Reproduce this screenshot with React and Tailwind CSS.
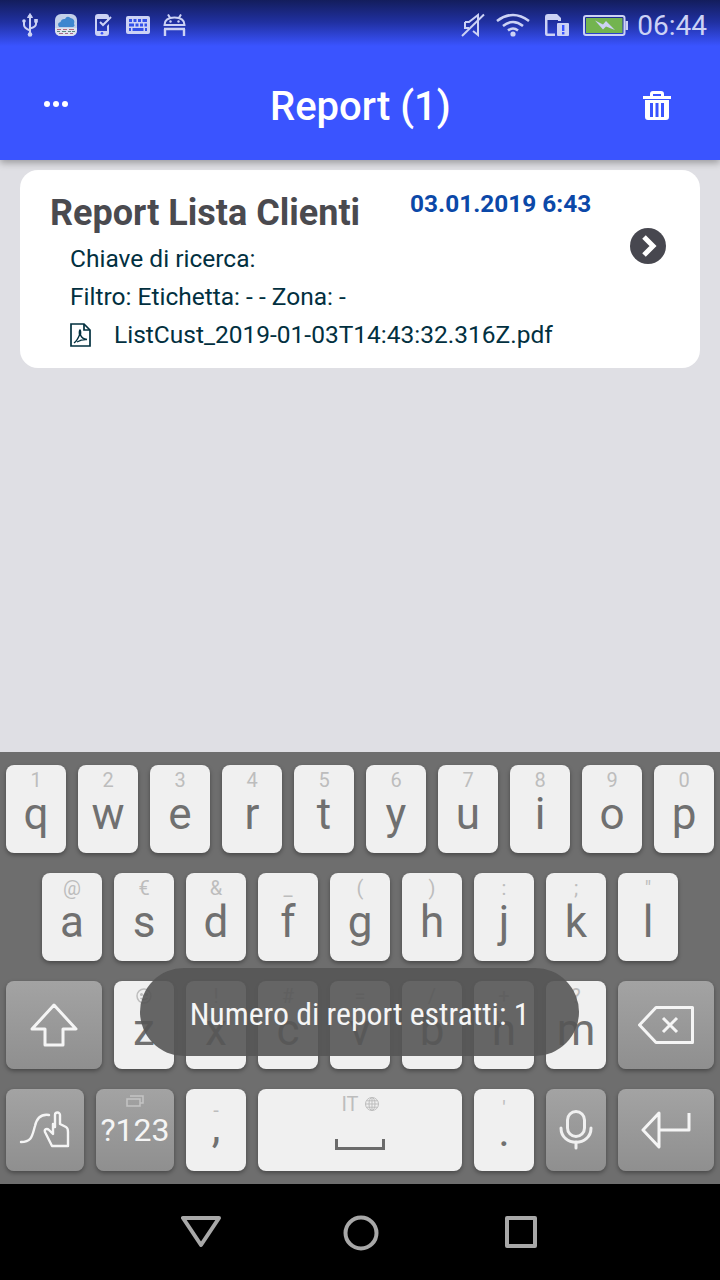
import React from "react";

const row1 = [["1","q"],["2","w"],["3","e"],["4","r"],["5","t"],["6","y"],["7","u"],["8","i"],["9","o"],["0","p"]];
const row2 = [["@","a"],["€","s"],["&","d"],["_","f"],["(","g"],[")","h"],[":","j"],[";","k"],['"',"l"]];
const row3 = [["","z"],["!","x"],["#","c"],["=","v"],["/","b"],["+","n"],["?","m"]];

function Key({ hint, letter, smile }) {
  return (
    <div className="w-[60px] h-full rounded-[8px] bg-[#f0f0f0] shadow-[0_2px_4px_rgba(0,0,0,0.35)] flex flex-col items-center pt-[4px]">
      <div className="h-[22px] text-[20px] leading-[22px] text-[#bdbdbd] flex items-center justify-center">
        {smile ? (
          <svg width="16" height="16" viewBox="0 0 16 16" fill="none" stroke="#bdbdbd" strokeWidth="1.5">
            <circle cx="8" cy="8" r="7" />
            <circle cx="5.5" cy="6.5" r="0.8" fill="#bdbdbd" />
            <circle cx="10.5" cy="6.5" r="0.8" fill="#bdbdbd" />
            <path d="M4.5 10 Q8 13 11.5 10" />
          </svg>
        ) : hint}
      </div>
      <div className="text-[44px] leading-[48px] text-[#707070] -mt-[1px]">{letter}</div>
    </div>
  );
}

function FnKey({ className, children }) {
  return (
    <div className={`h-full rounded-[8px] bg-gradient-to-b from-[#a3a3a3] to-[#8f8f8f] shadow-[0_2px_4px_rgba(0,0,0,0.35)] flex flex-col items-center justify-center ${className}`}>
      {children}
    </div>
  );
}

function StatusLeft() {
  const c = "#ccd2f5";
  return (
    <div className="flex items-center pl-[22px]">
      <svg width="16" height="24" viewBox="0 0 16 24" fill="none" stroke={c} strokeWidth="2">
        <path d="M8 3 V21" />
        <path d="M5.5 4.5 L8 0.5 L10.5 4.5 Z" fill={c} strokeWidth="1" />
        <circle cx="8" cy="21.5" r="2.3" fill={c} stroke="none" />
        <path d="M2 9 V12 Q2 15 8 17.5" />
        <path d="M14 8 V11 Q14 14 8 15.5" />
        <circle cx="2" cy="8" r="1.8" fill={c} stroke="none" />
        <rect x="12.2" y="6" width="3.6" height="3.6" fill={c} stroke="none" />
      </svg>
      <svg className="ml-[17px]" width="22" height="22" viewBox="0 0 22 22">
        <rect x="0" y="0" width="22" height="22" rx="6" fill="#c3d0ea" />
        <path d="M4 13 Q1.5 9 5.5 8 Q6.5 4.5 10 5 Q12 1 15.5 4 Q20.5 5 19 10 Q20.5 12 18 13 Z" fill="#3f86cf" />
        <path d="M0 14 H22 V16 Q22 22 16 22 H6 Q0 22 0 16 Z" fill="#dfe3ee" />
        <path d="M2 15.5 H6 M8 15.5 H12 M14 15.5 H19" stroke="#b5687d" strokeWidth="1.2" />
        <path d="M2 17.5 H5 M7 17.5 H11 M13 17.5 H16 M17 17.5 H20" stroke="#5d8a80" strokeWidth="1.2" />
        <path d="M4 19.5 H8 M10 19.5 H13 M15 19.5 H18" stroke="#a56a8d" strokeWidth="1.2" />
      </svg>
      <svg className="ml-[18px]" width="18" height="22" viewBox="0 0 18 22" fill={c}>
        <path d="M3 0 H11 Q14 0 14 3 V6 L12 8 V5 H2 V17 H12 V12 L14 10 V19 Q14 22 11 22 H3 Q0 22 0 19 V3 Q0 0 3 0 Z" />
        <circle cx="7" cy="19.3" r="1.3" fill="#3a54ff" />
        <path d="M5 8 L8 11 L16 3" fill="none" stroke={c} strokeWidth="2" />
      </svg>
      <svg className="ml-[13px]" width="24" height="18" viewBox="0 0 24 18">
        <rect x="0" y="0" width="24" height="18" rx="2" fill={c} />
        <path d="M3 3 H6 V6 H3 Z M7.5 3 H10.5 V6 H7.5 Z M12 3 H15 V6 H12 Z M16.5 3 H21 V6 H16.5 Z M3 7.5 H8 V10.5 H3 Z M9.5 7.5 H12.5 V10.5 H9.5 Z M14 7.5 H17 V10.5 H14 Z M18.5 7.5 H21 V10.5 H18.5 Z M3 12 H5 V15 H3 Z M6.5 12 H17.5 V15 H6.5 Z M19 12 H21 V15 H19 Z" fill="#3350e8" />
      </svg>
      <svg className="ml-[13px]" width="23" height="22" viewBox="0 0 23 22" fill="none" stroke={c} strokeWidth="2">
        <path d="M1.5 11 Q1.5 3.5 11.5 3.5 Q21.5 3.5 21.5 11 Z" fill="none" />
        <path d="M5 0.5 L7.5 4.5 M18 0.5 L15.5 4.5" />
        <circle cx="7.5" cy="7.5" r="1.2" fill={c} stroke="none" />
        <circle cx="15.5" cy="7.5" r="1.2" fill={c} stroke="none" />
        <path d="M1 15 H22 M2 15 V22 M21 15 V22" strokeWidth="2.4" />
      </svg>
    </div>
  );
}

function StatusRight() {
  const c = "#ccd2f5";
  return (
    <div className="flex items-center ml-auto pr-[13px]">
      <svg width="24" height="24" viewBox="0 0 24 24" fill="none" stroke={c} strokeWidth="2">
        <path d="M4 9 V15 H8" />
        <path d="M4 9 H8 L17 2 V22 L12 18" />
        <path d="M23 1.5 L1 23" />
      </svg>
      <svg className="ml-[11px]" width="34" height="24" viewBox="0 0 34 24" fill="none" stroke={c} strokeWidth="2.6">
        <path d="M1 8 Q17 -4 33 8" />
        <path d="M7 13 Q17 5 27 13" />
        <path d="M12 17.5 Q17 13.5 22 17.5" />
        <circle cx="17" cy="21" r="2.6" fill={c} stroke="none" />
      </svg>
      <svg className="ml-[15px]" width="24" height="22" viewBox="0 0 24 22">
        <path d="M3 0 H12 L16 4 V7 H13 V4.5 L11 2.5 H2.5 V19.5 H10 V22 H2 Q0 22 0 20 V3 Q0 0 3 0 Z" fill={c} />
        <path d="M2 1 H12 L15 4 V6 H2 Z" fill={c} />
        <rect x="12" y="9" width="12" height="13" rx="1" fill={c} />
        <rect x="17" y="11" width="2.4" height="6" fill="#3a54ff" />
        <rect x="17" y="18" width="2.4" height="2.4" fill="#3a54ff" />
      </svg>
      <svg className="ml-[14px]" width="45" height="21" viewBox="0 0 45 21">
        <rect x="1" y="1" width="40.5" height="19" rx="2" fill="none" stroke={c} strokeWidth="2" />
        <rect x="3" y="3" width="36.5" height="15" fill="#73b44f" />
        <rect x="42.5" y="6" width="2.5" height="9" fill={c} />
        <path d="M12 5.5 L20 9.5 L23 6 L32 15 L23 11.5 L20 14.5 Z" fill={c} />
      </svg>
      <span className="ml-[9px] mt-[2px] text-[28px] leading-[32px] text-[#ccd2f5]">06:44</span>
    </div>
  );
}

export default function App() {
  return (
    <div className="relative w-[720px] h-[1280px] overflow-hidden flex flex-col bg-[#dfdfe4] [font-family:Roboto,sans-serif]">
      <header className="relative z-10 h-[160px] shrink-0 flex flex-col bg-[linear-gradient(to_bottom,#131d5c_0px,#2030a0_22px,#3a54ff_46px)] shadow-[0_3px_7px_rgba(0,0,0,0.3)]">
        <div className="h-[50px] flex items-center">
          <StatusLeft />
          <StatusRight />
        </div>
        <div className="flex-1 flex items-center">
          <div className="flex gap-[3px] ml-[44px] mb-[3px]">
            <span className="w-[6px] h-[6px] rounded-full bg-white" />
            <span className="w-[6px] h-[6px] rounded-full bg-white" />
            <span className="w-[6px] h-[6px] rounded-full bg-white" />
          </div>
          <h1 className="ml-[202px] mt-[4px] text-[40px] leading-[44px] font-medium text-white">Report (1)</h1>
          <svg className="ml-auto mr-[49px]" width="28" height="29" viewBox="0 0 28 29" fill="white">
            <path d="M7 5 V3 Q7 0 10 0 H18 Q21 0 21 3 V5 H28 V8 H0 V5 Z M10 5 H18 V3 H10 Z" fillRule="evenodd" />
            <path d="M2 9 H26 V26 Q26 29 23 29 H5 Q2 29 2 26 Z M7 12 V26 H10 V12 Z M12.5 12 V26 H15.5 V12 Z M18 12 V26 H21 V12 Z" fillRule="evenodd" />
          </svg>
        </div>
      </header>

      <main className="flex-1 pt-[10px] px-[20px]">
        <div className="h-[198px] rounded-[18px] bg-white flex items-start pl-[30px] pr-[34px]">
          <div className="flex-1">
            <div className="flex items-start">
              <div className="text-[36px] leading-[44px] font-bold text-[#4a4a4f] mt-[21px]">Report Lista Clienti</div>
              <div className="ml-[50px] mt-[20px] text-[24.4px] leading-[28px] font-bold text-[#0b48a8]">03.01.2019 6:43</div>
            </div>
            <div className="pl-[20px] pt-[5px] text-[24.5px] leading-[38px] text-[#02303f]">
              <div>Chiave di ricerca:</div>
              <div>Filtro: Etichetta: - - Zona: -</div>
              <div className="flex items-center">
                <svg width="21" height="24" viewBox="0 0 21 24" fill="none" stroke="#02303f" strokeWidth="1.7">
                  <path d="M1 1 H14 L20 7 V23 H1 Z" />
                  <path d="M14 1 V7 H20" />
                  <path d="M4 20 Q7 18 9.5 12 Q9 8 10 7 Q11 8 10.5 12 Q12 16 17 16.5 Q12 16 7 19" strokeWidth="1.4" />
                </svg>
                <span className="ml-[23px]">ListCust_2019-01-03T14:43:32.316Z.pdf</span>
              </div>
            </div>
          </div>
          <svg className="mt-[58px]" width="36" height="36" viewBox="0 0 36 36">
            <circle cx="18" cy="18" r="18" fill="#47474f" />
            <path d="M14 9 L23 18 L14 27" fill="none" stroke="white" strokeWidth="5" />
          </svg>
        </div>
      </main>

      <section className="relative h-[432px] shrink-0 bg-[#6e6e6e] pt-[13px] flex flex-col gap-[20px]">
        <div className="h-[88px] flex gap-[12px] pl-[6px]">
          {row1.map(([h, l]) => <Key key={l} hint={h} letter={l} />)}
        </div>
        <div className="h-[88px] flex gap-[12px] pl-[42px]">
          {row2.map(([h, l]) => <Key key={l} hint={h} letter={l} />)}
        </div>
        <div className="h-[88px] flex gap-[12px] pl-[6px]">
          <FnKey className="w-[96px]">
            <svg width="48" height="44" viewBox="0 0 48 44" fill="none" stroke="#f5f5f5" strokeWidth="3" strokeLinejoin="round">
              <path d="M24 2 L46 26 H33 V42 H15 V26 H2 Z" />
            </svg>
          </FnKey>
          {row3.map(([h, l]) => <Key key={l} hint={h} letter={l} smile={l === "z"} />)}
          <FnKey className="w-[96px]">
            <svg width="56" height="38" viewBox="0 0 56 38" fill="none" stroke="#f5f5f5" strokeWidth="3" strokeLinejoin="round">
              <path d="M1.5 19 L18 1.5 H54.5 V36.5 H18 Z" />
              <path d="M25 12 L39 26 M39 12 L25 26" />
            </svg>
          </FnKey>
        </div>
        <div className="h-[82px] flex gap-[12px] pl-[6px]">
          <FnKey className="w-[78px]">
            <svg width="54" height="40" viewBox="0 0 54 40" fill="none" stroke="#f5f5f5" strokeWidth="2.4" strokeLinejoin="round" strokeLinecap="round">
              <path d="M3 32 C14 32 14 26 17 16 C19 7 24 4 31 5" />
              <path d="M37 17 V5 a2.5 2.5 0 0 1 5 0 V14 L48 17 C50 18 50 20 50 22 V36 H34 L27 22 C26 19 29 18 31 20 L35 24 V14" />
            </svg>
          </FnKey>
          <FnKey className="w-[78px]">
            <svg className="mb-[3px]" width="18" height="12" viewBox="0 0 18 12" fill="none" stroke="#c4c4c4" strokeWidth="1.5">
              <rect x="1" y="4" width="13" height="7" />
              <path d="M4 1 H17 V8 H14" />
            </svg>
            <span className="text-[32px] leading-[40px] text-[#f5f5f5] mb-[15px]">?123</span>
          </FnKey>
          <div className="w-[60px] h-full rounded-[8px] bg-[#f0f0f0] shadow-[0_2px_4px_rgba(0,0,0,0.35)] flex flex-col items-center pt-[10px]">
            <div className="h-[22px] text-[20px] leading-[22px] text-[#bdbdbd]">-</div>
            <div className="text-[44px] leading-[48px] text-[#707070] -mt-[18px]">,</div>
          </div>
          <div className="w-[204px] h-full rounded-[8px] bg-[#f0f0f0] shadow-[0_2px_4px_rgba(0,0,0,0.35)] flex flex-col items-center pt-[4px]">
            <div className="h-[22px] flex items-center gap-[6px] text-[20px] leading-[22px] text-[#bdbdbd]">
              <span>IT</span>
              <svg width="14" height="14" viewBox="0 0 14 14" fill="none" stroke="#bdbdbd" strokeWidth="1">
                <circle cx="7" cy="7" r="6.5" />
                <ellipse cx="7" cy="7" rx="3" ry="6.5" />
                <path d="M0.5 7 H13.5 M7 0.5 V13.5 M1.5 3.8 H12.5 M1.5 10.2 H12.5" />
              </svg>
            </div>
            <svg className="mt-[24px]" width="50" height="11" viewBox="0 0 50 11" fill="none" stroke="#6b6b6b" strokeWidth="3">
              <path d="M1.5 0 V9.5 H48.5 V0" />
            </svg>
          </div>
          <div className="w-[60px] h-full rounded-[8px] bg-[#f0f0f0] shadow-[0_2px_4px_rgba(0,0,0,0.35)] flex flex-col items-center pt-[8px]">
            <div className="h-[22px] text-[20px] leading-[22px] text-[#bdbdbd]">'</div>
            <div className="text-[44px] leading-[48px] text-[#707070] -mt-[12px]">.</div>
          </div>
          <FnKey className="w-[60px]">
            <svg width="36" height="40" viewBox="0 0 36 40" fill="none" stroke="#f0f0f0" strokeWidth="3" strokeLinecap="round">
              <rect x="9.5" y="1.5" width="17" height="25" rx="8.5" />
              <path d="M3 18 C3 37 33 37 33 18" />
              <path d="M18 32 V38" />
            </svg>
          </FnKey>
          <FnKey className="w-[96px]">
            <svg width="52" height="38" viewBox="0 0 52 38" fill="none" stroke="#f5f5f5" strokeWidth="3" strokeLinejoin="round">
              <path d="M19 2 L3 19 L19 36 Z" />
              <path d="M19 19 H49 V2" />
            </svg>
          </FnKey>
        </div>

        <div className="absolute left-[140px] top-[216px] w-[439px] h-[88px] rounded-full bg-[rgba(85,85,85,0.9)] flex items-center justify-center pt-[3px]">
          <span className="text-[31.8px] leading-[36px] text-[#f5f5f5] [font-stretch:condensed]">Numero di report estratti: 1</span>
        </div>
      </section>

      <nav className="h-[96px] shrink-0 bg-black flex items-start pt-[32px] pl-[181px]">
        <svg width="40" height="32" viewBox="0 0 40 32" fill="none" stroke="#a8a8a8" strokeWidth="4" strokeLinejoin="round">
          <path d="M2 2 H38 L20 29 Z" />
        </svg>
        <svg className="ml-[122px] -mt-[1px]" width="36" height="36" viewBox="0 0 36 36" fill="none" stroke="#a8a8a8" strokeWidth="4">
          <circle cx="18" cy="18" r="15.5" />
        </svg>
        <svg className="ml-[126px]" width="32" height="32" viewBox="0 0 32 32" fill="none" stroke="#a8a8a8" strokeWidth="4" strokeLinejoin="round">
          <rect x="2" y="2" width="28" height="28" />
        </svg>
      </nav>
    </div>
  );
}
